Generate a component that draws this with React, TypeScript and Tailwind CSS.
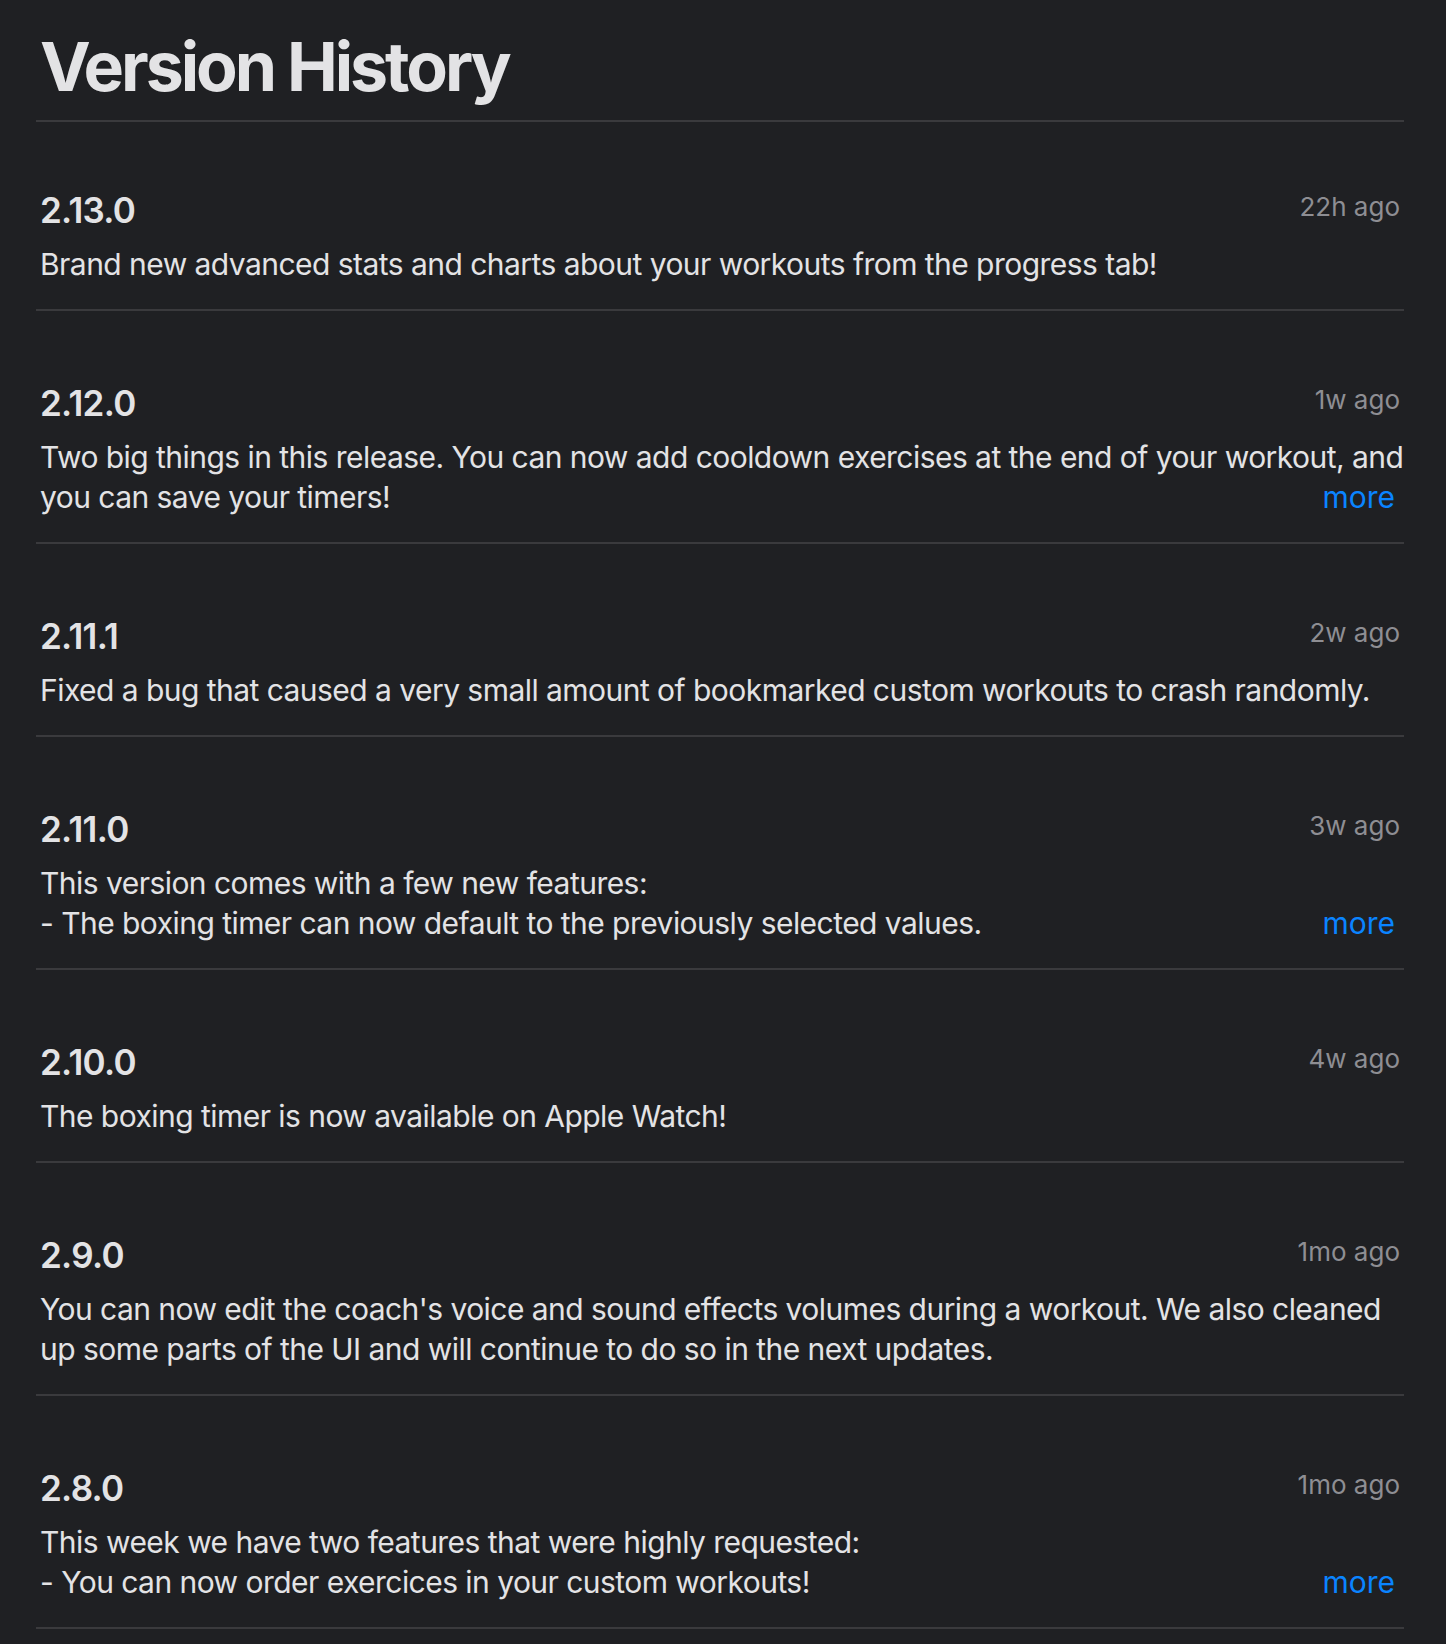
import React from "react";

type Release = {
  version: string;
  ago: string;
  lines: string[];
  more?: boolean;
};

const releases: Release[] = [
  {
    version: "2.13.0",
    ago: "22h ago",
    lines: ["Brand new advanced stats and charts about your workouts from the progress tab!"],
  },
  {
    version: "2.12.0",
    ago: "1w ago",
    lines: [
      "Two big things in this release. You can now add cooldown exercises at the end of your workout, and",
      "you can save your timers!",
    ],
    more: true,
  },
  {
    version: "2.11.1",
    ago: "2w ago",
    lines: ["Fixed a bug that caused a very small amount of bookmarked custom workouts to crash randomly."],
  },
  {
    version: "2.11.0",
    ago: "3w ago",
    lines: [
      "This version comes with a few new features:",
      "- The boxing timer can now default to the previously selected values.",
    ],
    more: true,
  },
  {
    version: "2.10.0",
    ago: "4w ago",
    lines: ["The boxing timer is now available on Apple Watch!"],
  },
  {
    version: "2.9.0",
    ago: "1mo ago",
    lines: [
      "You can now edit the coach's voice and sound effects volumes during a workout. We also cleaned",
      "up some parts of the UI and will continue to do so in the next updates.",
    ],
  },
  {
    version: "2.8.0",
    ago: "1mo ago",
    lines: [
      "This week we have two features that were highly requested:",
      "- You can now order exercices in your custom workouts!",
    ],
    more: true,
  },
];

function ReleaseRow({ release, first }: { release: Release; first: boolean }) {
  const last = release.lines.length - 1;
  return (
    <div>
      <div className={first ? "px-[4px] pt-[68px] pb-[25px]" : "px-[4px] pt-[72px] pb-[25px]"}>
        <div className="flex items-start justify-between">
          <span className="text-[35px] leading-[40px] font-semibold tracking-[-0.02em] text-[#e3e3e5]">
            {release.version}
          </span>
          <span className="text-[26px] leading-[34px] text-[#8e8e93]">{release.ago}</span>
        </div>
        <div className="mt-[14px] text-[30px] leading-[40px] tracking-[-0.018em] text-[#e3e3e5]">
          {release.lines.map((line, i) => (
            <div key={i} className="flex justify-between whitespace-nowrap">
              <span>{line}</span>
              {release.more && i === last && (
                <button className="pr-[5px] tracking-normal text-[#0a84ff] cursor-pointer">more</button>
              )}
            </div>
          ))}
        </div>
      </div>
      <div className="h-[2px] bg-[#3a3a3d]" />
    </div>
  );
}

export default function App() {
  return (
    <main className="min-h-screen bg-[#1f2023] font-['Inter','Liberation_Sans',sans-serif] antialiased">
      <div className="pl-[36px] pr-[42px]">
        <h1 className="px-[4px] pt-[29px] pb-[17px] text-[68px] leading-[74px] font-bold tracking-[-0.045em] text-[#e3e3e5]">
          Version History
        </h1>
        <div className="h-[2px] bg-[#3a3a3d]" />
        {releases.map((r, i) => (
          <ReleaseRow key={r.version} release={r} first={i === 0} />
        ))}
      </div>
    </main>
  );
}
